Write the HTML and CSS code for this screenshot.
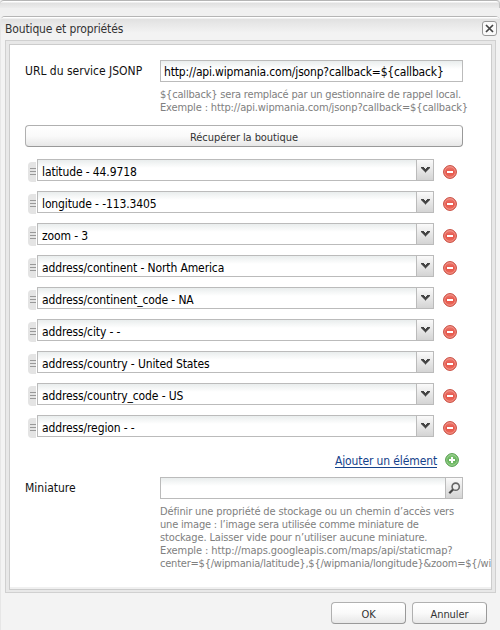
FILE: index.html
```html
<!DOCTYPE html>
<html lang="fr">
<head>
<meta charset="utf-8">
<title>Boutique et propriétés</title>
<link rel="stylesheet" href="styles.css">
</head>
<body>
<svg class="defs" width="0" height="0" aria-hidden="true">
  <defs>
    <linearGradient id="red" x1="0" y1="0" x2="0" y2="1"><stop offset="0" stop-color="#ee8278"/><stop offset=".5" stop-color="#e65347"/><stop offset="1" stop-color="#ee7263"/></linearGradient>
    <linearGradient id="green" x1="0" y1="0" x2="0" y2="1"><stop offset="0" stop-color="#8ccb80"/><stop offset=".5" stop-color="#62b058"/><stop offset="1" stop-color="#82c775"/></linearGradient>
    <symbol id="remove" viewBox="0 0 14 14"><circle cx="7" cy="7" r="6.4" fill="url(#red)" stroke="#c5493d"/><circle cx="7" cy="7" r="5.3" fill="none" stroke="#f3a69c" stroke-width=".7"/><path d="M4 6h6v2H4z" fill="#fff"/></symbol>
    <symbol id="add" viewBox="0 0 14 14"><circle cx="7" cy="7" r="6.4" fill="url(#green)" stroke="#549b4d"/><circle cx="7" cy="7" r="5.3" fill="none" stroke="#a9d8a0" stroke-width=".7"/><path d="M6 4h2v2h2v2H8v2H6V8H4V6h2z" fill="#fff"/></symbol>
    <symbol id="arrow" viewBox="0 0 9 6"><path d="M0 0h3v1h1v1h1V1h1V0h3v1.4H8v1H7v1H6v1H5v1H4v-1H3v-1H2v-1H1v-1H0z" fill="#444"/></symbol>
  </defs>
</svg>
<div class="backdrop"></div>
<main class="window">
  <header class="header">
    <h1 class="title">Boutique et propriétés</h1>
    <button class="close" aria-label="Fermer"><svg width="9" height="9" viewBox="0 0 9 9"><path d="M1 1l7 7M8 1L1 8" stroke="#444" stroke-width="1.7"/></svg></button>
  </header>
  <div class="frame">
    <div class="panel">
      <section class="field">
        <label class="label url-label">URL du service JSONP</label>
        <div class="control">
          <div class="input url">http://api.wipmania.com/jsonp?callback=${callback}</div>
          <div class="hint"><div class="tight">${callback} sera remplacé par un gestionnaire de rappel local.</div><div>Exemple : http://api.wipmania.com/jsonp?callback=${callback}</div></div>
        </div>
      </section>
      <button class="button fetch">Récupérer la boutique</button>
      <div class="rows">
        <div class="row"><i class="grip"></i><div class="input combo"><span class="value">latitude - 44.9718</span><span class="trigger"><svg class="arrow"><use href="#arrow"/></svg></span></div><svg class="icon"><use href="#remove"/></svg></div>
        <div class="row"><i class="grip"></i><div class="input combo"><span class="value">longitude - -113.3405</span><span class="trigger"><svg class="arrow"><use href="#arrow"/></svg></span></div><svg class="icon"><use href="#remove"/></svg></div>
        <div class="row"><i class="grip"></i><div class="input combo"><span class="value">zoom - 3</span><span class="trigger"><svg class="arrow"><use href="#arrow"/></svg></span></div><svg class="icon"><use href="#remove"/></svg></div>
        <div class="row"><i class="grip"></i><div class="input combo"><span class="value">address/continent - North America</span><span class="trigger"><svg class="arrow"><use href="#arrow"/></svg></span></div><svg class="icon"><use href="#remove"/></svg></div>
        <div class="row"><i class="grip"></i><div class="input combo"><span class="value">address/continent_code - NA</span><span class="trigger"><svg class="arrow"><use href="#arrow"/></svg></span></div><svg class="icon"><use href="#remove"/></svg></div>
        <div class="row"><i class="grip"></i><div class="input combo"><span class="value">address/city - -</span><span class="trigger"><svg class="arrow"><use href="#arrow"/></svg></span></div><svg class="icon"><use href="#remove"/></svg></div>
        <div class="row"><i class="grip"></i><div class="input combo"><span class="value">address/country - United States</span><span class="trigger"><svg class="arrow"><use href="#arrow"/></svg></span></div><svg class="icon"><use href="#remove"/></svg></div>
        <div class="row"><i class="grip"></i><div class="input combo"><span class="value">address/country_code - US</span><span class="trigger"><svg class="arrow"><use href="#arrow"/></svg></span></div><svg class="icon"><use href="#remove"/></svg></div>
        <div class="row"><i class="grip"></i><div class="input combo"><span class="value">address/region - -</span><span class="trigger"><svg class="arrow"><use href="#arrow"/></svg></span></div><svg class="icon"><use href="#remove"/></svg></div>
      </div>
      <div class="add"><a class="link">Ajouter un élément</a><svg class="icon"><use href="#add"/></svg></div>
      <section class="field">
        <label class="label">Miniature</label>
        <div class="control">
          <div class="input combo thumb"><span class="value"></span><span class="trigger"><svg width="13" height="13" viewBox="0 0 13 13"><circle cx="7.7" cy="4.7" r="3.6" fill="#eee" stroke="#666" stroke-width="1.6"/><path d="M5 7.5L1.3 11.2" stroke="#444" stroke-width="2.2"/></svg></span></div>
          <div class="hint"><div>Définir une propriété de stockage ou un chemin d’accès vers</div><div class="tight">une image : l’image sera utilisée comme miniature de</div><div>stockage. Laisser vide pour n’utiliser aucune miniature.</div><div class="loose">Exemple : http://maps.googleapis.com/maps/api/staticmap?</div><div class="template">center=${/wipmania/latitude},${/wipmania/longitude}&amp;zoom=${/wi</div></div>
        </div>
      </section>
    </div>
  </div>
  <footer class="footer"><button class="button">OK</button><button class="button">Annuler</button></footer>
</main>
</body>
</html>
```
FILE: styles.css
```css
* { box-sizing: border-box; }
body { margin: 0; width: 500px; height: 630px; overflow: hidden; background: #f0f0f0; color: #111; font: 12px/14px "DejaVu Sans Condensed", "DejaVu Sans", sans-serif; }
button { font: inherit; color: #333; padding: 0; }
.defs { position: absolute; }
.backdrop { height: 8px; margin-bottom: 8px; border-top: 1px solid #b5b5b5; border-right: 1px solid #c5c5c5; border-radius: 4px 4px 0 0; background: linear-gradient(#fff 0 1px, #e0e0e0 2px, #ececec); }
.window { height: 614px; border-top: 1px solid #b5b5b5; border-left: 1px solid #e6e6e6; border-radius: 5px 5px 0 0; background: #f3f3f3; padding: 0 4px; }
.header { display: flex; justify-content: space-between; height: 23px; margin: 0 -4px; padding: 0 3px 0 4px; background: linear-gradient(#fff 0 1px, #e1e1e1 2px, #f3f3f3 16px); border-radius: 4px 4px 0 0; }
.title { margin: 5px 0 0; font-size: 12px; line-height: 15px; font-weight: normal; color: #333; letter-spacing: -.14px; }
.close { display: flex; align-items: center; justify-content: center; width: 15px; height: 15px; margin-top: 4px; border: 1px solid #999; border-radius: 3px; background: #fafafa; }
.frame { width: 491px; height: 553px; padding: 3px; border: 1px solid #d0d0d0; background: #e8e8e8; }
.panel { height: 546px; overflow: hidden; border: 1px solid #ccc; padding: 15px 28px 0 15px; background: linear-gradient(#fff 542px, #f0f0f0 542px); }
.field { display: flex; }
.label { width: 135px; padding-top: 4px; letter-spacing: 0; }
.control { width: 303px; }
.input { height: 22px; border: 1px solid #bbb; background: linear-gradient(#e9eded, #fff 8px); color: #000; line-height: 23px; padding-left: 3px; white-space: nowrap; letter-spacing: -.17px; }
.hint { margin-top: 6px; font-size: 11px; line-height: 13px; color: #808080; white-space: nowrap; letter-spacing: -.14px; }
.tight { letter-spacing: -.19px; }
.loose { letter-spacing: -.09px; }
.template { letter-spacing: -.22px; }
.button { height: 22px; border: 1px solid #b0b0b0; border-right-color: #999; border-bottom-color: #999; border-radius: 4px; background: linear-gradient(#fff, #fafafa 50%, #e7e7e7); font-size: 11px; line-height: 20px; letter-spacing: -.08px; padding-top: 2px; }
.fetch { display: block; width: 438px; margin-top: 11px; }
.rows { margin-top: 12px; }
.row { display: flex; height: 32px; margin-left: 3px; }
.grip { width: 8px; height: 20px; margin: 3px 1px 0 0; border-radius: 4px 0 0 4px; background: linear-gradient(#999, #999) 2px 6px/6px 1px no-repeat, linear-gradient(#999, #999) 2px 9px/6px 1px no-repeat, linear-gradient(#999, #999) 2px 12px/6px 1px no-repeat, #e4e4e4; }
.combo { display: flex; width: 397px; padding-left: 4px; line-height: 25px; letter-spacing: -.12px; }
.value { flex: 1; }
.trigger { width: 17px; height: 20px; display: flex; align-items: center; justify-content: center; border-left: 1px solid #bbb; background: linear-gradient(#fafafa, #d4d4d4); }
.arrow { width: 9px; height: 6px; margin-top: -1px; }
.icon { width: 14px; height: 14px; margin: 6px 0 0 9px; }
.add { display: flex; justify-content: flex-end; height: 24px; padding: 0 5px 0 0; margin-top: 6px; }
.add .icon { margin: 0 -1px 0 8px; }
.link { color: #15428b; border-bottom: 1px solid #15428b; height: 14px; margin-top: 1px; letter-spacing: -.12px; }
.thumb { width: 303px; }
.footer { display: flex; justify-content: flex-end; gap: 6px; padding: 9px 9px 0 0; }
.footer .button { width: 75px; }
```
